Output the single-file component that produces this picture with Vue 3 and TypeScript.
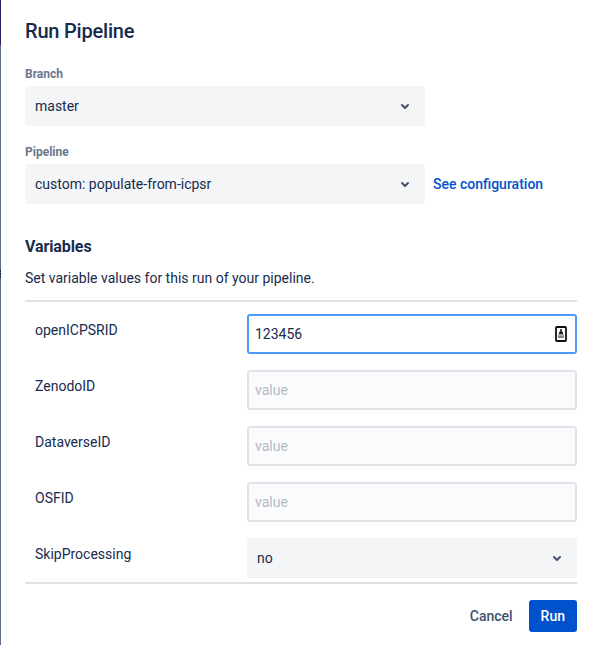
<script setup lang="ts">
import { ref } from 'vue'

interface Variable {
  name: string
  value: string
  kind: 'text' | 'select'
  focused?: boolean
}

const chevron =
  'M8.292 10.293a1.009 1.009 0 000 1.419l2.939 2.965c.218.215.5.322.779.322s.556-.107.769-.322l2.93-2.955a1.01 1.01 0 000-1.419.987.987 0 00-1.406 0l-2.298 2.317-2.307-2.327a.99.99 0 00-1.406 0z'

const branch = ref('master')
const pipeline = ref('custom: populate-from-icpsr')
const variables = ref<Variable[]>([
  { name: 'openICPSRID', value: '123456', kind: 'text', focused: true },
  { name: 'ZenodoID', value: '', kind: 'text' },
  { name: 'DataverseID', value: '', kind: 'text' },
  { name: 'OSFID', value: '', kind: 'text' },
  { name: 'SkipProcessing', value: 'no', kind: 'select' },
])
</script>

<template>
  <div class="page">
    <div class="backdrop"><span class="backdrop-top"></span><span class="backdrop-mark"></span></div>
    <main class="dialog">
      <h1 class="title">Run Pipeline</h1>

      <div class="label">Branch</div>
      <div class="select main-select">
        <span>{{ branch }}</span>
        <svg class="chevron" viewBox="0 0 24 24"><path :d="chevron" /></svg>
      </div>

      <div class="label second">Pipeline</div>
      <div class="pipeline-row">
        <div class="select main-select">
          <span>{{ pipeline }}</span>
          <svg class="chevron" viewBox="0 0 24 24"><path :d="chevron" /></svg>
        </div>
        <a class="link">See configuration</a>
      </div>

      <h2 class="subtitle">Variables</h2>
      <p class="hint">Set variable values for this run of your pipeline.</p>

      <div class="variables">
        <div v-for="v in variables" :key="v.name" class="row">
          <span class="name">{{ v.name }}</span>
          <div v-if="v.kind === 'text'" class="field" :class="{ focused: v.focused }">
            <input v-model="v.value" class="input" type="text" placeholder="value" />
            <svg v-if="v.focused" class="autofill" viewBox="0 0 12 16">
              <rect x="1" y="1" width="10" height="14" rx="0.8" fill="#fff" stroke="#111" stroke-width="1.8" />
              <path d="M5.2 3h1.6v2l1.2 1.6v1.4H4V6.600l1.200-1.600z" fill="#222" />
              <rect x="3" y="8" width="6" height="2" fill="#aaa" />
              <rect x="3" y="10" width="6" height="2" fill="#858585" />
            </svg>
          </div>
          <div v-else class="select">
            <span>{{ v.value }}</span>
            <svg class="chevron" viewBox="0 0 24 24"><path :d="chevron" /></svg>
          </div>
        </div>
      </div>

      <footer class="actions">
        <button class="btn">Cancel</button>
        <button class="btn primary">Run</button>
      </footer>
    </main>
  </div>
</template>

<style>
body {
  margin: 0;
  background: #fff;
}
</style>

<style scoped>
.page {
  display: flex;
  height: 645px;
  overflow: hidden;
  font-family: Roboto, sans-serif;
  font-size: 14px;
  line-height: 20px;
  color: #172b4d;
}
.backdrop {
  display: flex;
  flex-direction: column;
  width: 1px;
  background: #5e6c8f;
}
.backdrop-top {
  height: 45px;
  background: #252364;
}
.backdrop-mark {
  height: 8px;
  margin-top: 225px;
  background: repeating-linear-gradient(#1b2748 0 2px, #4a587b 2px 3px);
}
.dialog {
  box-sizing: border-box;
  width: 576px;
  padding: 19px 0 0 24px;
}
.title {
  margin: 0;
  font-size: 20px;
  font-weight: 500;
  line-height: 24px;
  letter-spacing: -0.2px;
}
.label {
  margin-top: 23px;
  font-size: 12px;
  font-weight: 700;
  line-height: 16px;
  color: #6b778c;
}
.label.second {
  margin-top: 18px;
}
.select {
  display: flex;
  align-items: center;
  justify-content: space-between;
  box-sizing: border-box;
  height: 40px;
  padding: 0 8px 0 10px;
  border-radius: 3px;
  background: #f4f5f7;
}
.main-select {
  width: 400px;
  margin-top: 4px;
}
.chevron {
  width: 24px;
  height: 24px;
  fill: #42526e;
}
.pipeline-row {
  display: flex;
  align-items: center;
  gap: 8px;
  margin-top: 4px;
}
.pipeline-row .main-select {
  margin-top: 0;
}
.link {
  font-weight: 500;
  color: #0052cc;
}
.subtitle {
  margin: 33px 0 0;
  font-size: 16px;
  font-weight: 700;
  line-height: 20px;
  letter-spacing: -0.1px;
}
.hint {
  margin: 11px 0 0;
}
.variables {
  display: flex;
  flex-direction: column;
  gap: 16px;
  margin-top: 12px;
  padding: 12px 0 4px;
  border-top: 2px solid #dfe1e6;
  border-bottom: 2px solid #dfe1e6;
}
.row {
  display: grid;
  grid-template-columns: 212px 330px;
  padding-left: 10px;
}
.name {
  padding-top: 6px;
}
.field {
  display: flex;
  align-items: center;
  box-sizing: border-box;
  height: 40px;
  padding: 0 8px 0 6px;
  border: 2px solid #dfe1e6;
  border-radius: 3px;
  background: #fafbfc;
}
.field.focused {
  border-color: #4c9aff;
  background: #fff;
}
.input {
  flex: 1;
  min-width: 0;
  height: 20px;
  padding: 0;
  border: 0;
  outline: 0;
  background: transparent;
  font: inherit;
  color: inherit;
}
.input::placeholder {
  color: #b3bac5;
  opacity: 1;
}
.autofill {
  width: 12px;
  height: 16px;
}
.actions {
  display: flex;
  justify-content: flex-end;
  gap: 4px;
  margin-top: 16px;
}
.btn {
  height: 32px;
  padding: 0 12px;
  border: 0;
  border-radius: 3px;
  background: transparent;
  font: inherit;
  font-weight: 500;
  color: #42526e;
}
.btn.primary {
  background: #0052cc;
  color: #fff;
}
</style>
